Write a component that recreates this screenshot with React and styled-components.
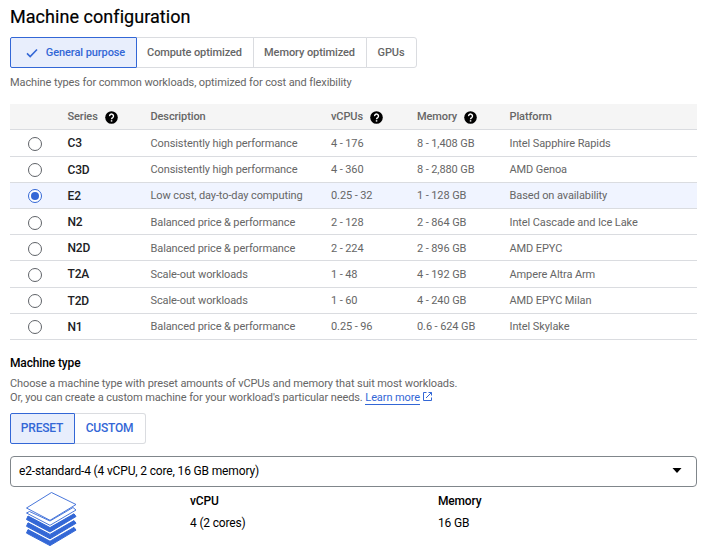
import React from 'react';
import styled, { createGlobalStyle } from 'styled-components';

const GlobalStyle = createGlobalStyle`
  * { box-sizing: border-box; }
  body {
    margin: 0;
    background: #fff;
    color: #000;
    font-family: Roboto, "Liberation Sans", sans-serif;
    font-size: 11px;
    letter-spacing: -0.1px;
  }
`;

const Page = styled.main`
  width: 711px;
  height: 547px;
  padding: 6px 14px 0 10px;
  overflow: hidden;
`;

const Title = styled.h1`
  margin: 0;
  font-size: 18px;
  font-weight: 400;
  line-height: 22px;
  letter-spacing: 0.05px;
  -webkit-text-stroke: 0.2px #000;
`;

const Segments = styled.div`
  display: flex;
  margin-top: ${(p) => p.$top}px;
`;

const Segment = styled.button`
  display: flex;
  align-items: center;
  justify-content: center;
  flex: none;
  width: ${(p) => p.$width}px;
  height: 31px;
  margin: 0;
  margin-left: ${(p) => (p.$joined ? '-1px' : 0)};
  padding: 0 1px ${(p) => (p.$blue ? 2 : 0)}px 0;
  border: 1px solid ${(p) => (p.$selected ? '#3367d6' : '#dadce0')};
  border-left-color: ${(p) => (p.$selected || p.$afterSelected ? '#3367d6' : '#dadce0')};
  border-radius: ${(p) => (p.$joined ? '0' : '2px 0 0 2px')};
  background: ${(p) => (p.$selected ? '#e8eefc' : '#fff')};
  color: ${(p) => (p.$selected || p.$blue ? '#3367d6' : '#666')};
  font-family: inherit;
  font-size: ${(p) => (p.$blue ? 12 : 11)}px;
  font-weight: 500;
  letter-spacing: ${(p) => (p.$blue ? -0.2 : -0.09)}px;
  &:last-child { border-radius: 0 3px 3px 0; }
`;

const CheckIcon = styled.svg`
  width: 12px;
  height: 10px;
  margin: 1px 8px 0 5px;
  fill: none;
  stroke: #3367d6;
  stroke-width: 1.6;
`;

const Caption = styled.p`
  margin: ${(p) => p.$top}px 0 0;
  color: #666;
  line-height: 14px;
`;

const Table = styled.div`
  width: 687px;
  margin-top: 14px;
`;

const Row = styled.div`
  display: grid;
  grid-template-columns: 57.5px 83px 180.5px 86px 92.5px 1fr;
  align-items: center;
  height: ${(p) => (p.$tall ? 27 : 26)}px;
  padding-top: ${(p) => (p.$low ? 1 : 0)}px;
  border-bottom: 1px solid #dadce0;
  background: ${(p) => (p.$selected ? '#f0f4ff' : '#fff')};
  color: #666;
`;

const HeaderRow = styled(Row)`
  padding: 0 0 1px;
  background: #f5f5f5;
  font-weight: 500;
`;

const HeaderCell = styled.div`
  display: flex;
  align-items: center;
  gap: 7px;
`;

const HelpIcon = styled.svg`
  width: 13px;
  height: 13px;
  margin-top: 2px;
`;

const SeriesName = styled.div`
  color: #202124;
  font-size: 12px;
  font-weight: 500;
  letter-spacing: -0.15px;
`;

const Radio = styled.span`
  display: flex;
  align-items: center;
  justify-content: center;
  width: 14px;
  height: 14px;
  margin: 1px 0 0 18px;
  border: 1px solid ${(p) => (p.$checked ? '#3367d6' : '#5f6368')};
  border-radius: 50%;
  background: #fff;
  &::after {
    content: '';
    width: 8px;
    height: 8px;
    border-radius: 50%;
    background: ${(p) => (p.$checked ? '#3367d6' : 'transparent')};
  }
`;

const SectionTitle = styled.h2`
  margin: 16px 0 0;
  font-size: 12px;
  font-weight: 500;
  line-height: 14px;
  letter-spacing: -0.13px;
`;

const LearnMore = styled.a`
  display: inline-block;
  height: 14px;
  color: #3367d6;
  border-bottom: 1px solid #3367d6;
`;

const ExternalIcon = styled.svg`
  width: 11px;
  height: 11px;
  margin-left: 2px;
  vertical-align: -1px;
  fill: none;
  stroke: #3367d6;
`;

const Select = styled.div`
  display: flex;
  align-items: center;
  justify-content: space-between;
  width: 687px;
  height: 31px;
  margin-top: 12px;
  padding: 0 14px 2px 8px;
  border: 1px solid #80868b;
  border-radius: 4px;
  font-size: 12px;
  letter-spacing: -0.155px;
`;

const Caret = styled.svg`
  width: 10px;
  height: 5px;
`;

const Summary = styled.div`
  display: grid;
  grid-template-columns: 180px 248px 1fr;
`;

const LayersIcon = styled.svg`
  width: 52px;
  height: 56px;
  margin: 4px 0 0 15px;
`;

const Spec = styled.dl`
  margin: 7px 0 0;
  font-size: 12px;
  letter-spacing: -0.17px;
`;

const SpecName = styled.dt`
  font-weight: 500;
  line-height: 14px;
`;

const SpecValue = styled.dd`
  margin: 8px 0 0;
  line-height: 14px;
`;

const families = [
  { label: 'General purpose', width: 127 },
  { label: 'Compute optimized', width: 118 },
  { label: 'Memory optimized', width: 114 },
  { label: 'GPUs', width: 51 },
];

const columns = [
  { label: 'Series', help: true },
  { label: 'Description' },
  { label: 'vCPUs', help: true },
  { label: 'Memory', help: true },
  { label: 'Platform' },
];

const series = [
  ['C3', 'Consistently high performance', '4 - 176', '8 - 1,408 GB', 'Intel Sapphire Rapids'],
  ['C3D', 'Consistently high performance', '4 - 360', '8 - 2,880 GB', 'AMD Genoa'],
  ['E2', 'Low cost, day-to-day computing', '0.25 - 32', '1 - 128 GB', 'Based on availability'],
  ['N2', 'Balanced price & performance', '2 - 128', '2 - 864 GB', 'Intel Cascade and Ice Lake'],
  ['N2D', 'Balanced price & performance', '2 - 224', '2 - 896 GB', 'AMD EPYC'],
  ['T2A', 'Scale-out workloads', '1 - 48', '4 - 192 GB', 'Ampere Altra Arm'],
  ['T2D', 'Scale-out workloads', '1 - 60', '4 - 240 GB', 'AMD EPYC Milan'],
  ['N1', 'Balanced price & performance', '0.25 - 96', '0.6 - 624 GB', 'Intel Skylake'],
];

function Help() {
  return (
    <HelpIcon viewBox="0 0 13 13">
      <circle cx="6.5" cy="6.5" r="6.3" fill="#000" />
      <path d="M4.6 5.1a1.95 1.95 0 1 1 3.1 1.5c-.75.5-1.15.8-1.15 1.6" fill="none" stroke="#fff" strokeWidth="1.4" />
      <path d="M5.8 9.2h1.5v1.4H5.8z" fill="#fff" />
    </HelpIcon>
  );
}

function Layers() {
  return (
    <LayersIcon viewBox="0 0 52 56">
      <g fill="#3367d6" stroke="#3367d6" strokeWidth="1" strokeLinejoin="round">
        {[0, 6.8, 13.6].map((dy) => (
          <path key={dy} transform={`translate(0 ${dy})`} d="M3 25 25 36.600 49 22.800 51 25.500 25 41 1.500 28.500z" />
        ))}
      </g>
      <g fill="#fff" stroke="#3367d6" strokeWidth="0.9" strokeLinejoin="round">
        <path d="M4.500 20.500 1.500 22 25 34.300 51 19 48 16.500 25 30z" />
        <path d="M1.500 17 26.500 1.500 51 13.500 25 29.300z" />
      </g>
    </LayersIcon>
  );
}

export default function App() {
  return (
    <>
      <GlobalStyle />
      <Page>
        <Title>Machine configuration</Title>
        <Segments $top={9}>
          {families.map((f, i) => (
            <Segment key={f.label} $width={f.width} $selected={i === 0} $joined={i > 0} $afterSelected={i === 1}>
              {i === 0 && (
                <CheckIcon viewBox="0 0 12 10"><path d="M1 5.400 4.200 8.500 11 1.500" /></CheckIcon>
              )}
              {f.label}
            </Segment>
          ))}
        </Segments>
        <Caption $top={8}>Machine types for common workloads, optimized for cost and flexibility</Caption>
        <Table>
          <HeaderRow>
            <span />
            {columns.map((c) => (
              <HeaderCell key={c.label}>{c.label}{c.help && <Help />}</HeaderCell>
            ))}
          </HeaderRow>
          {series.map(([name, description, cpus, memory, platform]) => (
            <Row
              key={name}
              $selected={name === 'E2'}
              $tall={name === 'C3' || name === 'T2A'}
              $low={name === 'N2' || name === 'N2D'}
            >
              <Radio $checked={name === 'E2'} />
              <SeriesName>{name}</SeriesName>
              <div>{description}</div>
              <div>{cpus}</div>
              <div>{memory}</div>
              <div>{platform}</div>
            </Row>
          ))}
        </Table>
        <SectionTitle>Machine type</SectionTitle>
        <Caption $top={7}>
          Choose a machine type with preset amounts of vCPUs and memory that suit most workloads.<br />
          Or, you can create a custom machine for your workload's particular needs.{' '}
          <LearnMore>Learn more</LearnMore>
          <ExternalIcon viewBox="0 0 11 11">
            <path d="M4.500 1.500H1.500v8h8v-3M6.500 1.500h3v3M9.500 1.500 4 7" />
          </ExternalIcon>
        </Caption>
        <Segments $top={8}>
          <Segment $width={65} $selected $blue>PRESET</Segment>
          <Segment $width={72} $joined $afterSelected $blue>CUSTOM</Segment>
        </Segments>
        <Select>
          e2-standard-4 (4 vCPU, 2 core, 16 GB memory)
          <Caret viewBox="0 0 10 5"><path d="M0.500 0h9L5 5z" /></Caret>
        </Select>
        <Summary>
          <Layers />
          <Spec>
            <SpecName>vCPU</SpecName>
            <SpecValue>4 (2 cores)</SpecValue>
          </Spec>
          <Spec>
            <SpecName>Memory</SpecName>
            <SpecValue>16 GB</SpecValue>
          </Spec>
        </Summary>
      </Page>
    </>
  );
}
